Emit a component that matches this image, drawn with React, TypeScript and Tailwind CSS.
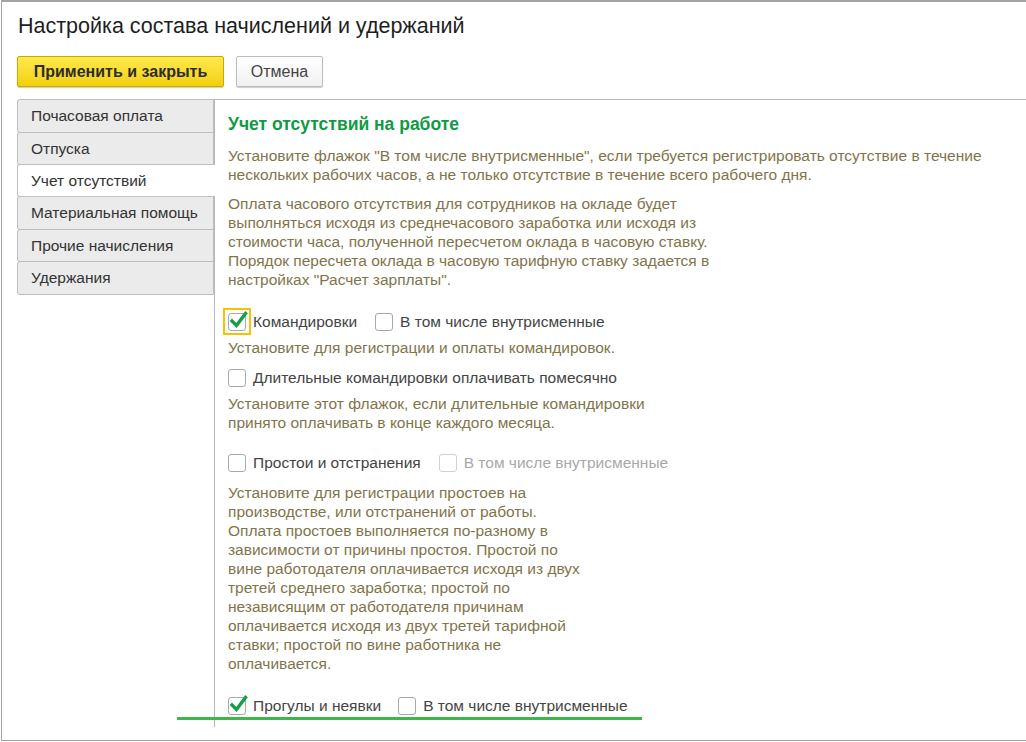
import React from "react";

const FONT = { fontFamily: '"Liberation Sans", Arial, sans-serif' };

function Box({ checked, disabled, focused }: { checked?: boolean; disabled?: boolean; focused?: boolean }) {
  return (
    <div className="relative w-[18px] h-[18px] shrink-0">
      {focused && (
        <div className="absolute -left-[5px] -top-[5px] w-[28px] h-[27px] border-2 border-[#f5c400]" />
      )}
      <div
        className={`w-[18px] h-[18px] rounded-[3px] border bg-white ${
          disabled ? "border-[#d0d0d0]" : "border-[#a9a9a9]"
        }`}
      />
      {checked && (
        <svg className="absolute left-0 -top-[4px]" width="22" height="22" viewBox="0 0 22 22">
          <path d="M4 12 L8.5 16.5 L17.5 4.5" fill="none" stroke="#15a048" strokeWidth="3.4" strokeLinecap="square" />
        </svg>
      )}
    </div>
  );
}

function Check({
  label,
  checked,
  disabled,
  focused,
}: {
  label: string;
  checked?: boolean;
  disabled?: boolean;
  focused?: boolean;
}) {
  return (
    <div className="flex items-center gap-[7px]">
      <Box checked={checked} disabled={disabled} focused={focused} />
      <span className={`whitespace-nowrap ${disabled ? "text-[#a8a8a8]" : "text-[#444444]"}`}>{label}</span>
    </div>
  );
}

function Lines({ lines, className }: { lines: string[]; className?: string }) {
  return (
    <div className={`text-[#7f754a] leading-[19px] ${className ?? ""}`}>
      {lines.map((l, i) => (
        <div key={i} className="whitespace-nowrap">
          {l}
        </div>
      ))}
    </div>
  );
}

const tabs = [
  { t: "Почасовая оплата", h: "h-[34px]" },
  { t: "Отпуска", h: "h-[33px]" },
  { t: "Учет отсутствий", h: "h-[33px]", active: true },
  { t: "Материальная помощь", h: "h-[34px]" },
  { t: "Прочие начисления", h: "h-[33px]" },
  { t: "Удержания", h: "h-[34px]" },
];

export default function App() {
  return (
    <div className="relative w-[1026px] h-[742px] bg-white overflow-hidden" style={FONT}>
      <div className="ml-[1px] h-[741px] border-l border-t-2 border-b border-[#a3a3a3] flex flex-col">
        <div className="pl-[16px] pt-[12px] text-[21.5px] leading-[24px] text-[#1e1e1e]">
          Настройка состава начислений и удержаний
        </div>
        <div className="flex gap-[12px] ml-[15px] mt-[18px]">
          <button className="w-[207px] h-[31px] rounded-[2px] border border-[#c9aa00] bg-gradient-to-b from-[#ffe94a] to-[#f2d000] text-[#2d2d2d] font-bold text-[16px] shadow-[0_1px_1px_rgba(0,0,0,0.2)]">
            Применить и закрыть
          </button>
          <button className="w-[87px] h-[31px] rounded-[2px] border border-[#bdbdbd] bg-gradient-to-b from-white to-[#f1f1f1] text-[#444] text-[16px] shadow-[0_1px_1px_rgba(0,0,0,0.2)]">
            Отмена
          </button>
        </div>
        <div className="flex mt-[12px] ml-[15px] text-[15.5px]">
          <div className="w-[197px] flex flex-col">
            {tabs.map((tab) =>
              tab.active ? (
                <div
                  key={tab.t}
                  className={`${tab.h} relative z-10 w-[198px] bg-white border border-r-0 border-[#c0c0c0] rounded-l-[3px] pl-[13px] flex items-center text-[#333] -mt-[1px] first:mt-0`}
                >
                  {tab.t}
                </div>
              ) : (
                <div
                  key={tab.t}
                  className={`${tab.h} bg-[#ebebeb] border border-[#bdbdbd] rounded-l-[3px] pl-[13px] flex items-center text-[#333] -mt-[1px] first:mt-0`}
                >
                  {tab.t}
                </div>
              )
            )}
          </div>
          <div className="flex-1 h-[628px] border-l border-t border-[#b8b8b8] pl-[13px] pt-[14px]">
            <div className="text-[#0f9a44] font-bold text-[17.5px] leading-[20px]">Учет отсутствий на работе</div>
            <Lines
              className="mt-[12px]"
              lines={[
                'Установите флажок "В том числе внутрисменные", если требуется регистрировать отсутствие в течение',
                "нескольких рабочих часов, а не только отсутствие в течение всего рабочего дня.",
              ]}
            />
            <Lines
              className="mt-[10px]"
              lines={[
                "Оплата часового отсутствия для сотрудников на окладе будет",
                "выполняться исходя из среднечасового заработка или исходя из",
                "стоимости часа, полученной пересчетом оклада в часовую ставку.",
                "Порядок пересчета оклада в часовую тарифную ставку задается в",
                'настройках "Расчет зарплаты".',
              ]}
            />
            <div className="h-[27px] mt-[19px] flex items-center gap-[18px]">
              <Check label="Командировки" checked focused />
              <Check label="В том числе внутрисменные" />
            </div>
            <Lines className="mt-[3px]" lines={["Установите для регистрации и оплаты командировок."]} />
            <div className="h-[27px] mt-[7px] flex items-center">
              <Check label="Длительные командировки оплачивать помесячно" />
            </div>
            <Lines
              className="mt-[3px]"
              lines={[
                "Установите этот флажок, если длительные командировки",
                "принято оплачивать в конце каждого месяца.",
              ]}
            />
            <div className="h-[27px] mt-[17px] flex items-center gap-[18px]">
              <Check label="Простои и отстранения" />
              <Check label="В том числе внутрисменные" disabled />
            </div>
            <Lines
              className="mt-[7px]"
              lines={[
                "Установите для регистрации простоев на",
                "производстве, или отстранений от работы.",
                "Оплата простоев выполняется по-разному в",
                "зависимости от причины простоя. Простой по",
                "вине работодателя оплачивается исходя из двух",
                "третей среднего заработка; простой по",
                "независящим от работодателя причинам",
                "оплачивается исходя из двух третей тарифной",
                "ставки; простой по вине работника не",
                "оплачивается.",
              ]}
            />
            <div className="h-[27px] mt-[19px] flex items-center gap-[17px]">
              <Check label="Прогулы и неявки" checked />
              <Check label="В том числе внутрисменные" />
            </div>
          </div>
        </div>
      </div>
      <div className="absolute left-[177px] top-[717px] w-[465px] h-[3px] bg-[#3db64b]" />
    </div>
  );
}
